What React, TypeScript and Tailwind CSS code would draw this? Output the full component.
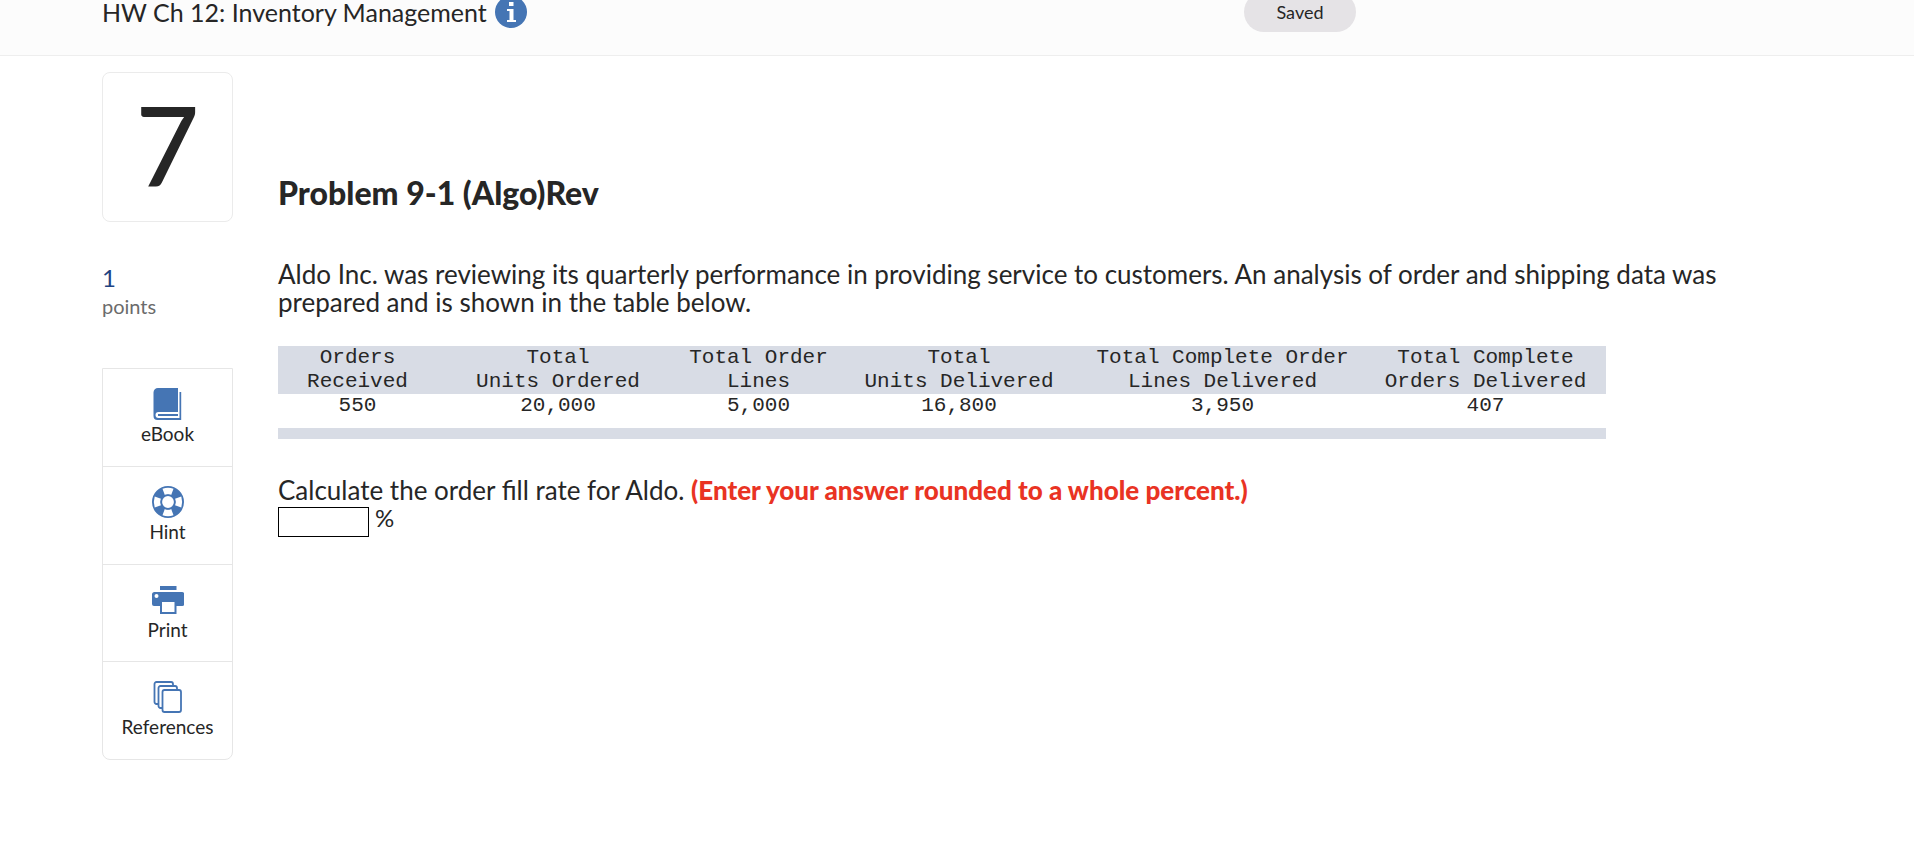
import React from 'react';

const columns = [
  { title: ['Orders', 'Received'], value: '550', width: 'w-[159px]' },
  { title: ['Total', 'Units Ordered'], value: '20,000', width: 'w-[242px]' },
  { title: ['Total Order', 'Lines'], value: '5,000', width: 'w-[159px]' },
  { title: ['Total', 'Units Delivered'], value: '16,800', width: 'w-[242px]' },
  { title: ['Total Complete Order', 'Lines Delivered'], value: '3,950', width: 'w-[285px]' },
  { title: ['Total Complete', 'Orders Delivered'], value: '407', width: 'w-[241px]' },
];

const BookIcon = () => (
  <svg viewBox="0 0 32 32" className="size-8" fill="none">
    <path
      fill="#4575b4"
      fillRule="evenodd"
      d="M6 0h20v24H6.500a3 3 0 0 0 0 6H27.500V4h1.700v28H5.500a4 4 0 0 1-4-4V4.500A4.500 4.500 0 0 1 6 0Z"
    />
    <path d="M6 27h20" stroke="#4575b4" strokeWidth="2" />
  </svg>
);

const HintIcon = () => (
  <svg viewBox="0 0 32 32" className="size-8" fill="none">
    <circle cx="16" cy="16" r="11" stroke="#4575b4" strokeWidth="10" />
    {/* light segments of the ring */}
    {[0, 90, 180, 270].map((angle) => (
      <path
        key={angle}
        fill="#fff"
        d="M10.500 2.700Q16 1 21.500 2.700L19.200 9Q16 8 12.800 9Z"
        transform={`rotate(${angle} 16 16)`}
      />
    ))}
    <circle cx="16" cy="16" r="6.800" stroke="#4575b4" strokeWidth="1.800" fill="#fff" />
  </svg>
);

const PrintIcon = () => (
  <svg viewBox="0 0 32 32" className="size-8" fill="none">
    <path
      fill="#4575b4"
      d="M8 2h16.500v4H8zM2.500 8h27.500a2.300 2.300 0 0 1 2.300 2.300V20a2 2 0 0 1-2 2H24.500v8H8v-8H2a2 2 0 0 1-2-2v-9.500A2.500 2.500 0 0 1 2.500 8Z"
    />
    <path fill="#fff" d="M10 18h12.500v10H10z" />
    <circle cx="4.500" cy="12" r="2" fill="#fff" />
  </svg>
);

const ReferencesIcon = () => (
  <svg viewBox="0 0 32 32" className="size-8" stroke="#4575b4" strokeWidth="1.800" fill="#fff">
    <rect x="2.500" y="1" width="18.500" height="22" rx="2" />
    <rect x="6.500" y="5" width="18.500" height="22" rx="2" />
    <rect x="10.500" y="9" width="18.500" height="22" rx="2" />
  </svg>
);

const tools = [
  { label: 'eBook', Icon: BookIcon },
  { label: 'Hint', Icon: HintIcon },
  { label: 'Print', Icon: PrintIcon },
  { label: 'References', Icon: ReferencesIcon },
];

const Header: React.FC = () => (
  <header className="flex h-14 justify-between border-b border-[#eeeeee] bg-[#fcfcfc] pl-[102px]">
    <div className="-mt-2 flex h-10 items-center gap-2">
      <h1 className="text-[25px] leading-8">HW Ch 12: Inventory Management</h1>
      <button type="button" aria-label="Assignment information">
        <svg viewBox="0 0 32 32" className="size-8">
          <circle cx="16" cy="16" r="16" fill="#4575b4" />
          <path fill="#fff" d="M14 6h4.500v4H14zM12 13h6.500v11H21v2h-9v-2h2.500v-9H12z" />
        </svg>
      </button>
    </div>
    <div className="-mt-2 mr-[558px] flex h-10 w-28 items-center justify-center rounded-full bg-[#e5e3e6] text-[18px]">
      Saved
    </div>
  </header>
);

const Sidebar: React.FC = () => (
  <aside className="w-[131px] shrink-0">
    <div className="flex h-[150px] items-center justify-center rounded-lg border border-[#ebebeb] pb-2 text-[110px] leading-none font-medium">
      7
    </div>
    <div className="mt-[42px] leading-7">
      <div className="text-[24px] text-[#1f4382]">1</div>
      <div className="text-[20px] text-[#6b6b6b]">points</div>
    </div>
    <nav className="mt-12 flex h-[392px] flex-col divide-y divide-[#e6e6e6] rounded-b-lg border border-[#e6e6e6]">
      {tools.map(({ label, Icon }) => (
        <button
          key={label}
          type="button"
          className="flex w-full flex-1 flex-col items-center justify-start pt-[19px] text-[19px] leading-7"
        >
          <Icon />
          {label}
        </button>
      ))}
    </nav>
  </aside>
);

const OrdersTable: React.FC = () => (
  <table className="mt-[30px] w-full max-w-[1328px] table-fixed border-collapse text-center font-['Liberation_Mono',monospace] text-[21px] leading-6">
    <thead className="bg-[#d8dce5]">
      <tr>
        {columns.map(({ title, width }) => (
          <th key={title.join(' ')} scope="col" className={`${width} p-0 font-normal`}>
            {title[0]}
            <br />
            {title[1]}
          </th>
        ))}
      </tr>
    </thead>
    <tbody>
      <tr>
        {columns.map(({ title, value }) => (
          <td key={title.join(' ')} className="p-0 pb-[10px]">
            {value}
          </td>
        ))}
      </tr>
    </tbody>
    <tfoot>
      <tr>
        <td colSpan={6} className="h-[11px] bg-[#d8dce5] p-0" />
      </tr>
    </tfoot>
  </table>
);

export default function App() {
  return (
    <div className="min-h-screen bg-white font-['Lato',sans-serif] text-[#262626]">
      <Header />
      <div className="flex gap-[45px] pt-4 pr-[180px] pl-[102px]">
        <Sidebar />
        <main className="min-w-0 flex-1 text-[26px] leading-7">
          <h2 className="mt-[101px] text-[32px] leading-10 font-black">Problem 9-1 (Algo)Rev</h2>
          <p className="mt-[47px]">
            Aldo Inc. was reviewing its quarterly performance in providing service to customers. An analysis of
            order and shipping data was prepared and is shown in the table below.
          </p>
          <OrdersTable />
          <p className="mt-[37px]">
            <label htmlFor="fill-rate">
              Calculate the order fill rate for Aldo.{' '}
              <span className="font-black text-[#e93323]">(Enter your answer rounded to a whole percent.)</span>
            </label>
          </p>
          <div className="flex items-start gap-[6px]">
            <input
              id="fill-rate"
              type="text"
              className="mt-[3px] h-[30px] w-[91px] border border-black px-1 text-[20px] outline-none"
            />
            <span className="text-[24px]">%</span>
          </div>
        </main>
      </div>
    </div>
  );
}
